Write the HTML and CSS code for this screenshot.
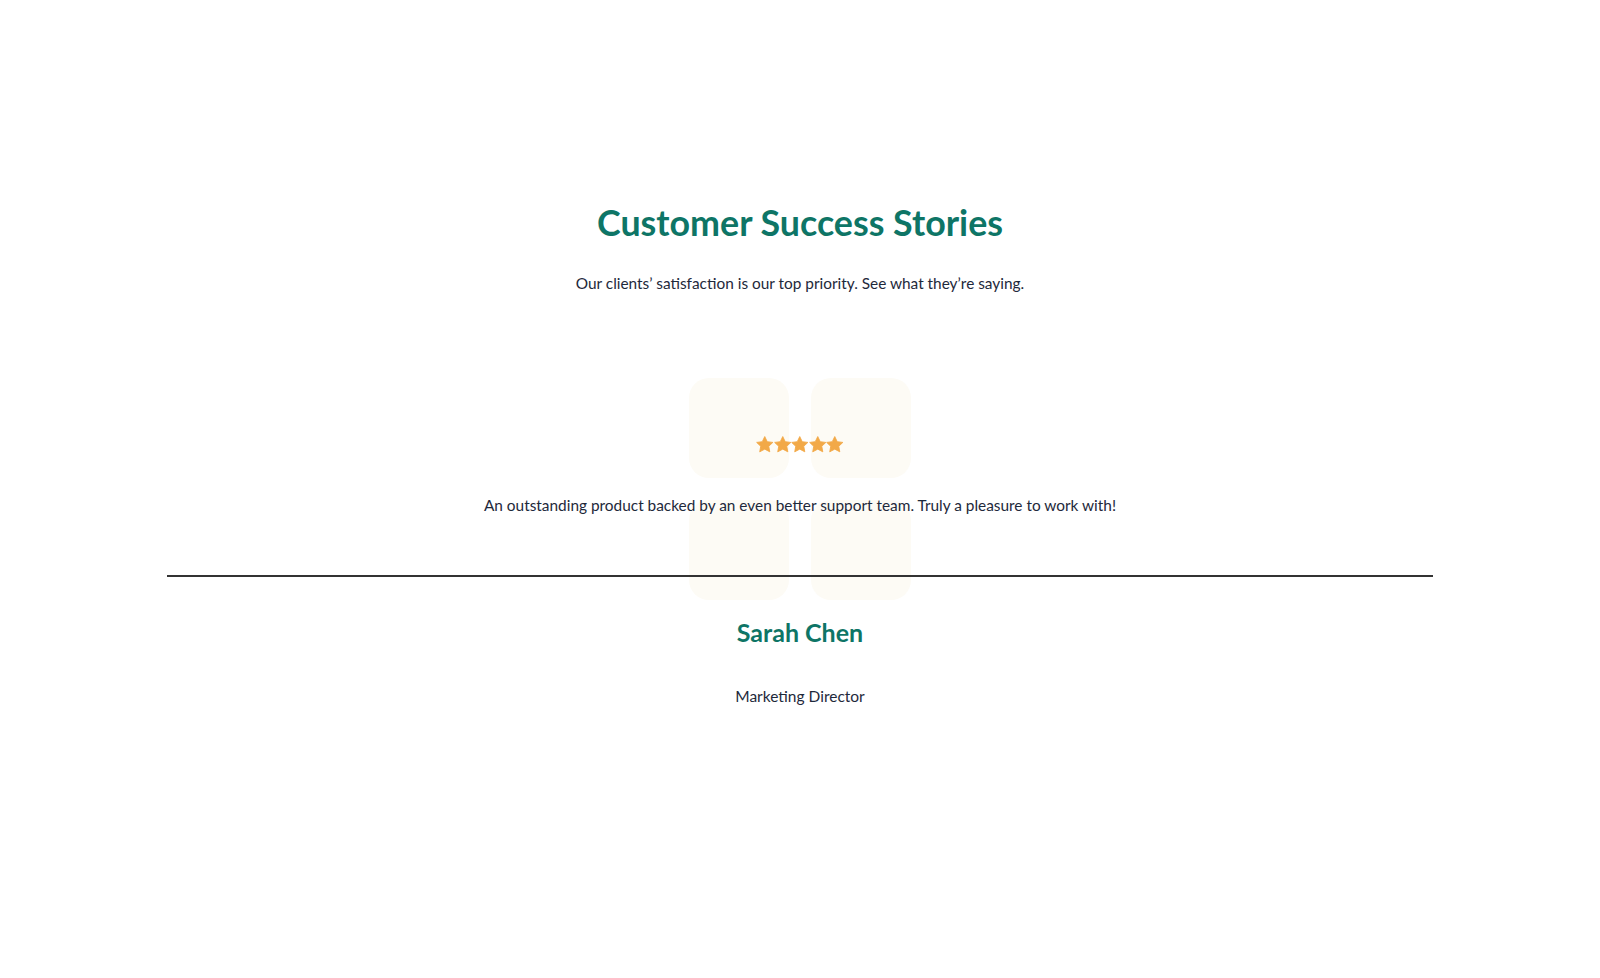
FILE: index.html
```html
<!DOCTYPE html>
<html lang="en">
<head>
<meta charset="utf-8">
<title>Customer Success Stories</title>
<link rel="stylesheet" href="styles.css">
</head>
<body>
<section class="stories">
  <h1 class="title">Customer Success Stories</h1>
  <p class="subtitle">Our clients’ satisfaction is our top priority. See what they’re saying.</p>
  <div class="testimonial">
    <div class="deco" aria-hidden="true">
      <span></span><span></span><span></span><span></span>
    </div>
    <div class="stars">
      <svg viewBox="0 0 24 24"><path d="M12 0.8l3.4 7 7.7 1-5.6 5.3 1.4 7.6L12 18l-6.9 3.7 1.4-7.6L0.9 8.8l7.7-1z"/></svg>
      <svg viewBox="0 0 24 24"><path d="M12 0.8l3.4 7 7.7 1-5.6 5.3 1.4 7.6L12 18l-6.9 3.7 1.4-7.6L0.9 8.8l7.7-1z"/></svg>
      <svg viewBox="0 0 24 24"><path d="M12 0.8l3.4 7 7.7 1-5.6 5.3 1.4 7.6L12 18l-6.9 3.7 1.4-7.6L0.9 8.8l7.7-1z"/></svg>
      <svg viewBox="0 0 24 24"><path d="M12 0.8l3.4 7 7.7 1-5.6 5.3 1.4 7.6L12 18l-6.9 3.7 1.4-7.6L0.9 8.8l7.7-1z"/></svg>
      <svg viewBox="0 0 24 24"><path d="M12 0.8l3.4 7 7.7 1-5.6 5.3 1.4 7.6L12 18l-6.9 3.7 1.4-7.6L0.9 8.8l7.7-1z"/></svg>
    </div>
    <p class="quote">An outstanding product backed by an even better support team. Truly a pleasure to work with!</p>
    <hr class="divider">
    <h2 class="name">Sarah Chen</h2>
    <p class="role">Marketing Director</p>
  </div>
</section>
</body>
</html>
```

FILE: styles.css
```css
html, body {
  margin: 0;
  padding: 0;
  background: #ffffff;
}
body {
  font-family: "Lato", "Inter", "Liberation Sans", sans-serif;
  color: #1e293b;
}
.stories {
  display: flex;
  flex-direction: column;
  align-items: center;
  padding-top: 201px;
  padding-bottom: 200px;
}
.title {
  margin: 0;
  font-size: 35.8px;
  line-height: 43px;
  font-weight: 700;
  color: #0e7566;
}
.subtitle {
  margin: 27px 0 0;
  font-size: 15.4px;
  line-height: 24px;
}
.testimonial {
  position: relative;
  width: 1266px;
  margin-top: 140px;
  display: flex;
  flex-direction: column;
  align-items: center;
}
.deco {
  position: absolute;
  top: -57px;
  left: 50%;
  transform: translateX(-50%);
  display: grid;
  grid-template-columns: 100px 100px;
  grid-template-rows: 100px 100px;
  gap: 22px;
  z-index: 0;
}
.deco span {
  background: #fdfbf5;
  border-radius: 20px;
}
.stars {
  position: relative;
  z-index: 1;
  display: flex;
  height: 18px;
  padding-top: 1px;
}
.stars svg {
  width: 17.5px;
  height: 17.5px;
  fill: #f2a948;
  stroke: #f2a948;
  stroke-width: 1.2;
  stroke-linejoin: round;
}
.quote {
  position: relative;
  z-index: 1;
  margin: 39px 0 0;
  font-size: 15.4px;
  line-height: 24px;
}
.divider {
  position: relative;
  z-index: 1;
  align-self: stretch;
  margin: 58px 0 0;
  border: 0;
  height: 2px;
  background: #333333;
}
.name {
  margin: 40px 0 0;
  font-size: 25px;
  line-height: 30px;
  font-weight: 700;
  color: #0e7566;
}
.role {
  margin: 37px 0 0;
  font-size: 15.5px;
  line-height: 24px;
}
```
